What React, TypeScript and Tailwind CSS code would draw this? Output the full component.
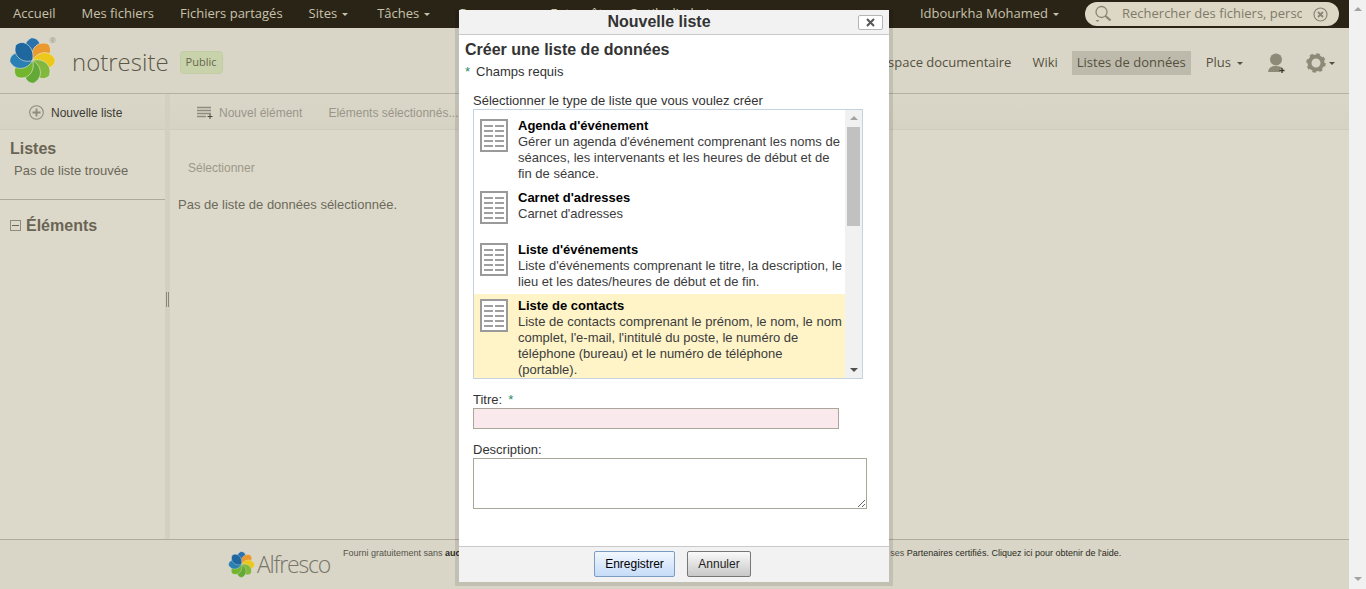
const Arrow = ({ cls = "" }: { cls?: string }) => (
  <span className={`inline-block w-0 h-0 border-x-[3px] border-x-transparent border-t-[3px] ${cls}`} />
);

const Flower = ({ size }: { size: number }) => {
  const petals = [
    { r: 5, c: "#2a72ad" },
    { r: 50, c: "#e9992e" },
    { r: 95, c: "#ecc81c" },
    { r: 140, c: "#82b83c" },
    { r: 185, c: "#62a936" },
    { r: 230, c: "#74b530" },
    { r: 275, c: "#2b80b3" },
    { r: 320, c: "#1f679f" },
  ];
  return (
    <svg width={size} height={size} viewBox="0 0 48 48" className="shrink-0">
      {petals.map((p) => (
        <path
          key={p.r}
          transform={`rotate(${p.r} 24 24)`}
          d="M24 24 C14 20 11 7 21 1 C32 0 35 16 24 24 Z"
          fill={p.c}
          stroke="#e8e6da"
          strokeWidth="0.6"
        />
      ))}
    </svg>
  );
};

const DocIcon = () => (
  <svg width="28" height="33" viewBox="0 0 28 33" className="shrink-0">
    <rect x="1" y="1" width="26" height="31" fill="#fff" stroke="#9a9a9a" strokeWidth="2" />
    {[6, 11, 16, 21, 26].map((y) => (
      <g key={y} fill="#9f9f9f">
        <rect x="4" y={y} width="9" height="2" />
        <rect x="15" y={y} width="9" height="2" />
      </g>
    ))}
  </svg>
);

const items = [
  { t: "Agenda d'événement", d: "Gérer un agenda d'événement comprenant les noms de séances, les intervenants et les heures de début et de fin de séance.", cls: "" },
  { t: "Carnet d'adresses", d: "Carnet d'adresses", cls: "min-h-[52px]" },
  { t: "Liste d'événements", d: "Liste d'événements comprenant le titre, la description, le lieu et les dates/heures de début et de fin.", cls: "" },
  { t: "Liste de contacts", d: "Liste de contacts comprenant le prénom, le nom, le nom complet, l'e-mail, l'intitulé du poste, le numéro de téléphone (bureau) et le numéro de téléphone (portable).", cls: "bg-[#fef4c8]" },
];

export default function App() {
  return (
    <div className="relative h-[589px] w-[1366px] overflow-hidden bg-[#dbd8c9] font-['Liberation_Sans',sans-serif] flex">
      <div className="flex flex-col w-[1349px] h-full">
        {/* top nav */}
        <div className="h-[28px] shrink-0 bg-[#2a2416] flex items-center font-['Open_Sans',sans-serif] text-[13px] text-[#c8c2ac] relative">
          <span className="ml-[13px]">Accueil</span>
          <span className="ml-[26px]">Mes fichiers</span>
          <span className="ml-[26px]">Fichiers partagés</span>
          <span className="ml-[26px] flex items-center gap-[5px]">Sites <Arrow cls="border-t-[#c8c2ac]" /></span>
          <span className="ml-[29px] flex items-center gap-[5px]">Tâches <Arrow cls="border-t-[#c8c2ac]" /></span>
          <span className="ml-[29px]">Personnes</span>
          <span className="ml-[27px]">Entrepôt</span>
          <span className="ml-[26px]">Outils d'admin.</span>
          <span className="ml-auto mr-[26px] flex items-center gap-[5px]">Idbourkha Mohamed <Arrow cls="border-t-[#c8c2ac]" /></span>
          <div className="mr-[10px] w-[254px] h-[24px] rounded-full bg-[#dcd8c5] flex items-center pl-[9px] pr-[11px]">
            <svg width="18" height="18" viewBox="0 0 18 18" fill="none" stroke="#8a8676" strokeWidth="1.3" className="shrink-0">
              <circle cx="7.5" cy="7" r="5.5" />
              <path d="M11.5 11 L16.5 15.5" strokeWidth="2.2" />
              <path d="M1.5 15 L5.5 15 L3.5 17 Z" fill="#8a8676" stroke="none" />
            </svg>
            <input
              readOnly
              placeholder="Rechercher des fichiers, personnes"
              className="ml-[10px] w-[180px] bg-transparent outline-none text-[13px] placeholder:text-[#7f7a69]"
            />
            <svg width="15" height="15" viewBox="0 0 15 15" fill="none" stroke="#8a8676" className="ml-auto shrink-0">
              <circle cx="7.5" cy="7.5" r="6.5" strokeWidth="1.2" />
              <path d="M5 5 L10 10 M10 5 L5 10" strokeWidth="1.8" />
            </svg>
          </div>
        </div>

        {/* site header */}
        <div className="h-[66px] shrink-0 border-b border-b-[#b4b1a2] bg-[#d9d6c7] flex items-center pt-[3px] font-['Open_Sans',sans-serif] relative">
          <div className="ml-[9px] relative -mt-[3px]">
            <Flower size={47} />
            <span className="absolute -top-[1px] right-0 text-[8px] leading-[8px] text-[#9a9788]">®</span>
          </div>
          <span className="ml-[16px] text-[24px] font-light text-[#5b5647]">notresite</span>
          <span className="ml-[11px] h-[23px] px-[5px] flex items-center rounded-[4px] bg-[#c8d2ab] border border-[#c2cda6] text-[11px] text-[#6a664f]">Public</span>
          <div className="ml-auto flex items-center text-[13px] text-[#55503f] pr-[14px] pt-[2px]">
            <span>Espace documentaire</span>
            <span className="ml-[21px]">Wiki</span>
            <span className="ml-[14px] h-[24px] px-[5px] flex items-center bg-[#bebaab]">Listes de données</span>
            <span className="ml-[15px] flex items-center gap-[6px]">Plus <Arrow cls="border-t-[#55503f]" /></span>
            <svg width="20" height="20" viewBox="0 0 20 20" className="ml-[24px]">
              <circle cx="9" cy="6.5" r="6" fill="#8e8a78" />
              <path d="M1 19 C2 14 5 13 9 13 C13 13 15 14 16 16 L13 16 L13 19 Z" fill="#8e8a78" />
              <path d="M15 15 L15 20 M12.5 17.5 L17.5 17.5" stroke="#3a3629" strokeWidth="1.3" />
            </svg>
            <svg width="20" height="20" viewBox="0 0 20 20" className="ml-[19px]">
              <circle cx="10" cy="10" r="6.5" fill="none" stroke="#8e8a78" strokeWidth="4" />
              <circle cx="10" cy="10" r="8.5" fill="none" stroke="#8e8a78" strokeWidth="2.5" strokeDasharray="3.4 3.3" />
            </svg>
            <Arrow cls="ml-[3px] border-t-[#55503f]" />
          </div>
        </div>

        {/* body */}
        <div className="flex-1 flex min-h-0">
          <div className="w-[165px] shrink-0 flex flex-col bg-[#dcd9ca]">
            <div className="h-[36px] shrink-0 flex items-center pt-[2px] pl-[29px] border-b border-b-[#cfccbd] bg-gradient-to-b from-[#dad7c8] to-[#d6d3c4]">
              <svg width="15" height="15" viewBox="0 0 15 15" fill="none" stroke="#8e8b7c">
                <circle cx="7.5" cy="7.5" r="6.8" strokeWidth="1.1" />
                <path d="M7.5 3.5 V11.5 M3.5 7.5 H11.5" strokeWidth="1.8" />
              </svg>
              <span className="ml-[7px] text-[12px] text-[#3c3a32]">Nouvelle liste</span>
            </div>
            <div className="pl-[10px] pt-[9px] text-[16px] leading-[19px] font-bold text-[#6a6454]">Listes</div>
            <div className="pl-[14px] pt-[5px] text-[13px] leading-[16px] text-[#6b6759]">Pas de liste trouvée</div>
            <div className="mt-[20px] h-px bg-[#aeab9c]" />
            <div className="pl-[10px] pt-[16px] flex items-center text-[16px] leading-[19px] font-bold text-[#6a6454]">
              <span className="w-[11px] h-[11px] border border-[#8e8b7c] flex items-center justify-center mr-[5px]">
                <span className="w-[7px] h-px bg-[#6a6454]" />
              </span>
              Éléments
            </div>
          </div>
          <div className="w-[5px] shrink-0 bg-[#d3d0c1] flex items-center justify-center gap-px pb-[34px]">
            <span className="w-px h-[15px] bg-[#8a8778]" />
            <span className="w-px h-[15px] bg-[#8a8778]" />
          </div>
          <div className="flex-1 flex flex-col bg-[#dcd9ca]">
            <div className="h-[36px] shrink-0 flex items-center pt-[2px] pl-[27px] border-b border-b-[#cfccbd] bg-gradient-to-b from-[#dad7c8] to-[#d6d3c4] text-[12px] text-[#99958a]">
              <svg width="16" height="13" viewBox="0 0 16 13" fill="none" stroke="#8e8b7c" strokeWidth="1.4">
                <path d="M0 1.5 H14 M0 4.5 H14 M0 7.5 H14 M0 10.5 H9" />
                <path d="M13 8 V13 M10.5 10.5 H15.5" stroke="#4a4739" strokeWidth="1" />
              </svg>
              <span className="ml-[6px]">Nouvel élément</span>
              <span className="ml-[26px]">Eléments sélectionnés...</span>
            </div>
            <div className="pl-[18px] pt-[30px] text-[12px] leading-[16px] text-[#9c9889]">Sélectionner</div>
            <div className="pl-[8px] pt-[21px] text-[13px] leading-[16px] text-[#6d695b]">Pas de liste de données sélectionnée.</div>
          </div>
        </div>

        {/* footer */}
        <div className="h-[50px] shrink-0 border-t border-t-[#aeab9c] bg-[#d9d6c7] flex items-start pl-[228px] relative">
          <div className="flex items-center pt-[10px]">
            <Flower size={27} />
            <span className="ml-[2px] text-[23px] leading-[28px] font-['Open_Sans',sans-serif] font-light tracking-[-1.2px] text-[#77746a]">Alfresco</span>
          </div>
          <div className="ml-[13px] pt-[7px] text-[9px] leading-[12px] text-[#55524a] whitespace-nowrap">
            Fourni gratuitement sans <b className="text-[#2c2a24]">aucune garantie.</b> Alfresco Community est distribué sous licence libre et bénéficie du support par Alfresco et de ses <span className="text-[#2c2a24]">Partenaires certifiés. Cliquez ici pour obtenir de l'aide.</span>
          </div>
        </div>
      </div>

      {/* page scrollbar */}
      <div className="w-[17px] shrink-0 bg-[#f1f1f1] flex flex-col items-center justify-between pt-[7px] pb-[8px]">
        <span className="w-0 h-0 border-x-[4px] border-x-transparent border-b-[4px] border-b-[#a3a3a3]" />
        <span className="w-0 h-0 border-x-[4px] border-x-transparent border-t-[4px] border-t-[#a3a3a3]" />
      </div>

      {/* dialog */}
      <div className="absolute left-[455px] top-[10px] w-[438px] h-[576px] border-x-[4px] border-b-[4px] border-[rgba(0,0,0,0.1)] bg-clip-padding bg-white flex flex-col text-[13px] text-[#333]">
        <div className="h-[25px] shrink-0 bg-[#f2f2f2] border-b border-b-[#c9c9c9] relative flex items-center justify-center pr-[30px] text-[16px] font-bold text-[#333]">
          Nouvelle liste
          <span className="absolute right-[6px] top-[5px] w-[25px] h-[15px] bg-white border border-[#b5b5b5] rounded-[2px] flex items-center justify-center">
            <svg width="9" height="9" viewBox="0 0 9 9" stroke="#555" strokeWidth="2"><path d="M1 1 L8 8 M8 1 L1 8" /></svg>
          </span>
        </div>
        <div className="flex-1 min-h-0 pl-[6px] pt-[5px]">
          <div className="text-[16px] leading-[19px] font-bold">Créer une liste de données</div>
          <div className="mt-[5px] leading-[16px]"><span className="text-[#2a8a6a] mr-[6px]">*</span>Champs requis</div>
          <div className="ml-[8px] mt-[13px] leading-[16px]">Sélectionner le type de liste que vous voulez créer</div>
          <div className="ml-[8px] w-[390px] h-[270px] border border-[#c5d3e0] flex">
            <div className="flex-1 min-w-0 overflow-hidden pt-[4px]">
              {items.map((it) => (
                <div key={it.t} className={`flex pl-[6px] pt-[3px] pb-[5px] ${it.cls}`}>
                  <div className="pt-[2px]"><DocIcon /></div>
                  <div className="ml-[10px] w-[327px] leading-[16px] relative top-px">
                    <div className="font-bold text-black">{it.t}</div>
                    <div className="text-[#3c3c3c]">{it.d}</div>
                  </div>
                </div>
              ))}
            </div>
            <div className="w-[17px] shrink-0 bg-[#f1f1f1] flex flex-col items-center justify-between py-[6px] relative">
              <span className="w-0 h-0 border-x-[4px] border-x-transparent border-b-[4px] border-b-[#a3a3a3]" />
              <span className="absolute left-[2px] top-[17px] w-[13px] h-[99px] bg-[#c1c1c1]" />
              <span className="w-0 h-0 border-x-[4px] border-x-transparent border-t-[4px] border-t-[#505050]" />
            </div>
          </div>
          <div className="ml-[8px] mt-[13px] leading-[16px]">Titre:<span className="text-[#2a8a6a] ml-[6px]">*</span></div>
          <input readOnly className="block ml-[8px] w-[366px] h-[21px] bg-[#f9e9ec] border border-[#a9a79a]" />
          <div className="ml-[8px] mt-[13px] leading-[16px]">Description:</div>
          <textarea readOnly className="block ml-[8px] w-[394px] h-[51px] bg-white border border-[#a9a79a]" />
        </div>
        <div className="h-[36px] shrink-0 bg-[#f2f2f2] border-t border-t-[#c9c9c9] flex items-start justify-center gap-[12px] pt-[4px] pr-[3px] text-[12px]">
          <button className="w-[81px] h-[26px] rounded-[2px] border border-[#7a9cc0] bg-gradient-to-b from-[#f2f7fe] to-[#c5dcf8] text-black">Enregistrer</button>
          <button className="w-[64px] h-[26px] rounded-[2px] border border-[#777] bg-gradient-to-b from-[#fafafa] to-[#c8c8c8] text-[#222]">Annuler</button>
        </div>
      </div>
    </div>
  );
}
